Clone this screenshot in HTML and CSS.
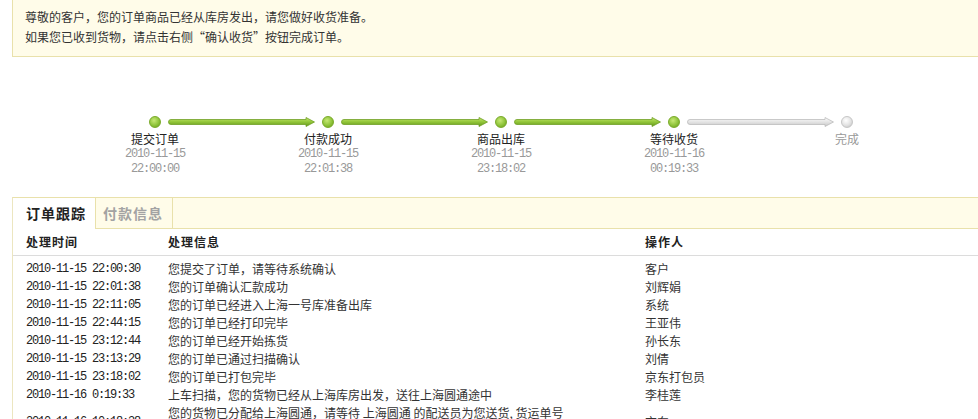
FILE: index.html
```html
<!DOCTYPE html>
<html lang="zh-CN">
<head>
  <meta charset="UTF-8" />
  <title>订单跟踪</title>
  <link rel="stylesheet" href="styles.css">
</head>
<body>

  <svg class="defs" width="0" height="0" aria-hidden="true">
    <defs>
      <linearGradient id="barGreen" x1="0" y1="0" x2="0" y2="1">
        <stop offset="0" stop-color="#c4e570"/>
        <stop offset="0.45" stop-color="#96c93c"/>
        <stop offset="1" stop-color="#62961a"/>
      </linearGradient>
      <linearGradient id="barGray" x1="0" y1="0" x2="0" y2="1">
        <stop offset="0" stop-color="#fcfcfc"/>
        <stop offset="0.5" stop-color="#e4e4e4"/>
        <stop offset="1" stop-color="#c6c6c6"/>
      </linearGradient>
    </defs>
  </svg>

  <div class="notice">
    <p>尊敬的客户，您的订单商品已经从库房发出，请您做好收货准备。</p>
    <p>如果您已收到货物，请点击右侧“确认收货”按钮完成订单。</p>
  </div>

  <div class="progress">
    <div class="step done">
      <span class="dot"></span>
      <span class="step-name">提交订单</span>
      <span class="step-date">2010-11-15</span>
      <span class="step-date">22:00:00</span>
    </div>
    <svg class="arrow" viewBox="0 0 161 12"><path d="M10,3.5 H145 V1.5 L153.5,6 L145,10.5 V8.5 H10 A2.5,2.5 0 0 1 10,3.5 Z" fill="url(#barGreen)" stroke="#70a024" stroke-width="0.8"/></svg>
    <div class="step done">
      <span class="dot"></span>
      <span class="step-name">付款成功</span>
      <span class="step-date">2010-11-15</span>
      <span class="step-date">22:01:38</span>
    </div>
    <svg class="arrow" viewBox="0 0 161 12"><path d="M10,3.5 H145 V1.5 L153.5,6 L145,10.5 V8.5 H10 A2.5,2.5 0 0 1 10,3.5 Z" fill="url(#barGreen)" stroke="#70a024" stroke-width="0.8"/></svg>
    <div class="step done">
      <span class="dot"></span>
      <span class="step-name">商品出库</span>
      <span class="step-date">2010-11-15</span>
      <span class="step-date">23:18:02</span>
    </div>
    <svg class="arrow" viewBox="0 0 161 12"><path d="M10,3.5 H145 V1.5 L153.5,6 L145,10.5 V8.5 H10 A2.5,2.5 0 0 1 10,3.5 Z" fill="url(#barGreen)" stroke="#70a024" stroke-width="0.8"/></svg>
    <div class="step done">
      <span class="dot"></span>
      <span class="step-name">等待收货</span>
      <span class="step-date">2010-11-16</span>
      <span class="step-date">00:19:33</span>
    </div>
    <svg class="arrow" viewBox="0 0 161 12"><path d="M10,3.5 H145 V1.5 L153.5,6 L145,10.5 V8.5 H10 A2.5,2.5 0 0 1 10,3.5 Z" fill="url(#barGray)" stroke="#bcbcbc" stroke-width="0.8"/></svg>
    <div class="step">
      <span class="dot"></span>
      <span class="step-name">完成</span>
    </div>
  </div>

  <div class="track">
    <div class="tabs">
      <span class="tab active">订单跟踪</span>
      <span class="tab">付款信息</span>
    </div>

    <div class="log">
      <div class="log-row log-head">
        <span>处理时间</span>
        <span>处理信息</span>
        <span>操作人</span>
      </div>
      <div class="log-body">
        <div class="log-row"><span class="time">2010-11-15 22:00:30</span><span>您提交了订单，请等待系统确认</span><span>客户</span></div>
        <div class="log-row"><span class="time">2010-11-15 22:01:38</span><span>您的订单确认汇款成功</span><span>刘辉娟</span></div>
        <div class="log-row"><span class="time">2010-11-15 22:11:05</span><span>您的订单已经进入上海一号库准备出库</span><span>系统</span></div>
        <div class="log-row"><span class="time">2010-11-15 22:44:15</span><span>您的订单已经打印完毕</span><span>王亚伟</span></div>
        <div class="log-row"><span class="time">2010-11-15 23:12:44</span><span>您的订单已经开始拣货</span><span>孙长东</span></div>
        <div class="log-row"><span class="time">2010-11-15 23:13:29</span><span>您的订单已通过扫描确认</span><span>刘倩</span></div>
        <div class="log-row"><span class="time">2010-11-15 23:18:02</span><span>您的订单已打包完毕</span><span>京东打包员</span></div>
        <div class="log-row"><span class="time">2010-11-16 0:19:33</span><span>上车扫描，您的货物已经从上海库房出发，送往上海圆通途中</span><span>李桂莲</span></div>
        <div class="log-row"><span class="time">2010-11-16 10:18:38</span><span>您的货物已分配给上海圆通，请等待 上海圆通 的配送员为您送货, 货运单号<br>为：6004326715</span><span>京东</span></div>
      </div>
    </div>
  </div>

</body>
</html>
```

FILE: styles.css
```css
body {
  margin: 0;
  background: #fff;
  color: #333;
  font-family: "Noto Sans CJK SC", sans-serif;
  font-size: 12px;
  overflow: hidden;
}
p {
  margin: 0;
}
.defs {
  position: absolute;
}
.notice {
  width: 1000px;
  margin-left: 12px;
  padding: 7px 12px 9px;
  line-height: 20px;
  background: #fffce9;
  border: 1px solid #e9e1ab;
  border-top: none;
}

/* progress */
.progress {
  display: flex;
  align-items: flex-start;
  margin-top: 59px;
  padding-left: 149px;
}
.step {
  flex: none;
  width: 12px;
  display: flex;
  flex-direction: column;
  align-items: center;
}
.dot {
  box-sizing: border-box;
  width: 12px;
  height: 12px;
  border-radius: 50%;
  border: 1px solid #c6c6c6;
  background: radial-gradient(circle at 40% 35%, #ffffff 0, #e2e2e2 55%, #bdbdbd 100%);
}
.done .dot {
  border-color: #79aa28;
  background: radial-gradient(circle at 40% 35%, #c6e874 0, #8fc43a 55%, #679b1b 100%);
}
.step-name {
  margin-top: 2px;
  line-height: 17px;
  white-space: nowrap;
  color: #999;
}
.done .step-name {
  color: #222;
}
.step-date {
  line-height: 15px;
  white-space: nowrap;
  color: #999;
  font-family: "Liberation Mono", monospace;
  font-size: 12px;
  letter-spacing: -1.2px;
}
.arrow {
  flex: none;
  display: block;
  width: 161px;
  height: 12px;
}

/* tabs */
.track {
  width: 1000px;
  margin: 20px 0 0 12px;
  border-top: 1px solid #e9e1ab;
  border-left: 1px solid #ece6c0;
}
.tabs {
  display: flex;
  height: 30px;
  background: #fffce9;
  border-bottom: 1px solid #e9e1ab;
}
.tab {
  padding: 0 9px 0 7px;
  line-height: 30px;
  font-size: 14px;
  font-weight: bold;
  letter-spacing: 1px;
  color: #a3a3a3;
  border-left: 1px solid #e9e1ab;
  border-right: 1px solid #e9e1ab;
}
.tab.active {
  height: 31px;
  padding: 0 9px 0 13px;
  color: #222;
  background: #fff;
  border: none;
}

/* log table */
.log-row {
  display: grid;
  grid-template-columns: 142px 477px 1fr;
  align-items: center;
  padding-left: 13px;
  line-height: 18px;
}
.log-head {
  line-height: 26px;
  font-weight: bold;
  letter-spacing: 1px;
  color: #222;
  border-bottom: 1px solid #dcdcdc;
}
.log-body {
  padding-top: 4px;
}
.time {
  font-family: "Liberation Mono", monospace;
  font-size: 12px;
  letter-spacing: -1.2px;
  color: #222;
}
```
